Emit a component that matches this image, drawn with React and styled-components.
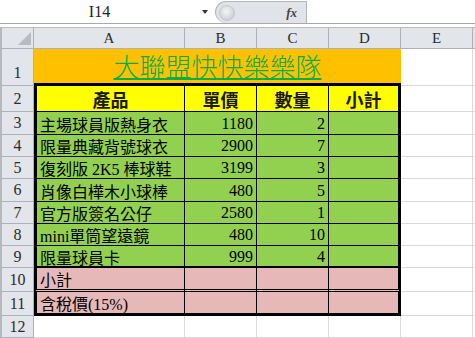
import React from "react";
import styled, { createGlobalStyle } from "styled-components";

const GlobalStyle = createGlobalStyle`
  html, body {
    margin: 0;
    padding: 0;
    background: #ffffff;
    overflow: hidden;
  }
`;

const gridLine = "1px solid #d9d9d9";
const thin = "1px solid #000";
const thick = "3px solid #000";
const headBorder = "#aeb2b8";

const Window = styled.div`
  width: 475px;
  height: 338px;
  display: flex;
  flex-direction: column;
  background: #fff;
`;

const FormulaBar = styled.div`
  display: flex;
  height: 24px;
  box-sizing: border-box;
  border-bottom: 1px solid #a7abb0;
`;

const NameBox = styled.div`
  width: 215px;
  position: relative;
  display: flex;
  align-items: center;
  justify-content: center;
  font: 16px "Liberation Serif", serif;
  color: #222;
  padding-right: 16px;
  box-sizing: border-box;
`;

const DropArrow = styled.span`
  position: absolute;
  right: 7px;
  top: 10px;
  width: 0;
  height: 0;
  border-left: 3px solid transparent;
  border-right: 3px solid transparent;
  border-top: 4px solid #333;
`;

const Pill = styled.div`
  width: 92px;
  box-sizing: border-box;
  display: flex;
  align-items: center;
  justify-content: space-between;
  padding: 0 9px 0 3px;
  background: #e0e3e7;
  border: 1px solid #b3b7bd;
  border-bottom: none;
  border-radius: 12px 0 0 12px;
  margin-top: 1px;
`;

const Knob = styled.span`
  width: 14px;
  height: 14px;
  border-radius: 50%;
  background: radial-gradient(circle at 45% 40%, #f4f5f7 0%, #d4d7db 60%, #b9bdc2 100%);
  border: 1px solid #c4c8cd;
`;

const Fx = styled.span`
  font: italic bold 13px "Liberation Serif", serif;
  color: #444;
`;

const FormulaInput = styled.div`
  flex: 1;
  background: #fff;
`;

const Gap = styled.div`
  height: 3px;
  border-bottom: 1px solid #b9bdc2;
`;

const Sheet = styled.div`
  flex: 1;
  display: grid;
  grid-template-columns: 34px 151px 72px 72px 72px 72px 1fr;
  grid-template-rows: 21px 37px 26px 23px 22px 22px 23px 22px 22px 22px 24px 24px 1fr;
`;

const Head = styled.div`
  box-sizing: border-box;
  display: flex;
  justify-content: center;
  align-items: ${(p) => (p.$bottom ? "flex-end" : "center")};
  padding-bottom: ${(p) => (p.$bottom ? "3px" : "0")};
  background: #e2e5e9;
  border-right: 1px solid ${headBorder};
  border-bottom: 1px solid ${headBorder};
  border-left: ${(p) => (p.$edge ? "2px solid #b5b9be" : "none")};
  font: ${(p) => (p.$row ? "16px" : "15px")} "Liberation Serif", serif;
  color: #2b2b2b;
`;

const Corner = styled(Head)`
  position: relative;
  &::after {
    content: "";
    position: absolute;
    right: 2px;
    bottom: 3px;
    width: 0;
    height: 0;
    border-left: 13px solid transparent;
    border-bottom: 13px solid #b8bcc2;
  }
`;

const justify = { left: "flex-start", right: "flex-end", center: "center" };

const Cell = styled.div`
  box-sizing: border-box;
  display: flex;
  align-items: center;
  justify-content: ${(p) => justify[p.$align || "left"]};
  padding: 1px 3px 0 3px;
  grid-column: ${(p) => p.$span || "auto"};
  background: ${(p) => p.$bg || "#fff"};
  border-right: ${(p) => p.$br || gridLine};
  border-bottom: ${(p) => p.$bb || gridLine};
  border-left: ${(p) => p.$bl || "none"};
  font: 16px "Liberation Serif", "Noto Sans CJK TC", serif;
  color: #000;
  white-space: nowrap;
  overflow: hidden;
`;

const TitleCell = styled(Cell)`
  align-items: flex-end;
  padding-bottom: 3px;
  overflow: visible;
`;

const Title = styled.span`
  font: 300 26px "Noto Sans CJK TC", sans-serif;
  line-height: 28px;
  color: #00b050;
  text-decoration: underline;
  text-decoration-thickness: 2px;
  text-underline-offset: 1px;
`;

const HeaderLabel = styled.span`
  font: bold 18px "Noto Sans CJK TC", sans-serif;
  color: #1a1a00;
`;

const products = [
  ["主場球員版熱身衣", 1180, 2],
  ["限量典藏背號球衣", 2900, 7],
  ["復刻版 2K5 棒球鞋", 3199, 3],
  ["肖像白樺木小球棒", 480, 5],
  ["官方版簽名公仔", 2580, 1],
  ["mini單筒望遠鏡", 480, 10],
  ["限量球員卡", 999, 4],
];

const GREEN = "#92d050";
const PINK = "#e6b8b7";
const YELLOW = "#ffff00";
const ORANGE = "#ffc000";

const Blank = ({ n }) => (
  <>
    {Array.from({ length: n }).map((_, i) => (
      <Cell key={i} />
    ))}
  </>
);

const TableRow = ({ num, cells, bg, bottom }) => (
  <>
    <Head $row $edge>{num}</Head>
    <Cell $bg={bg} $bl={thick} $br={thin} $bb={bottom}>
      {cells[0]}
    </Cell>
    <Cell $bg={bg} $br={thin} $bb={bottom} $align="right">
      {cells[1]}
    </Cell>
    <Cell $bg={bg} $br={thin} $bb={bottom} $align="right">
      {cells[2]}
    </Cell>
    <Cell $bg={bg} $br={thick} $bb={bottom} $align="right">
      {cells[3]}
    </Cell>
    <Blank n={2} />
  </>
);

export default function App() {
  return (
    <Window>
      <GlobalStyle />
      <FormulaBar>
        <NameBox>
          I14
          <DropArrow />
        </NameBox>
        <Pill>
          <Knob />
          <Fx>fx</Fx>
        </Pill>
        <FormulaInput />
      </FormulaBar>
      <Gap />
      <Sheet>
        <Corner $edge />
        {["A", "B", "C", "D", "E", ""].map((c, i) => (
          <Head key={i}>{c}</Head>
        ))}

        <Head $row $edge $bottom>
          1
        </Head>
        <TitleCell $span="span 4" $bg={ORANGE} $br="none" $bb={thick} $align="center">
          <Title>大聯盟快快樂樂隊</Title>
        </TitleCell>
        <Blank n={2} />

        <Head $row $edge>2</Head>
        {["產品", "單價", "數量", "小計"].map((h, i) => (
          <Cell
            key={h}
            $bg={YELLOW}
            $bl={i === 0 ? thick : "none"}
            $br={i === 3 ? thick : thin}
            $bb={thin}
            $align="center"
          >
            <HeaderLabel>{h}</HeaderLabel>
          </Cell>
        ))}
        <Blank n={2} />

        {products.map((p, i) => (
          <TableRow
            key={p[0]}
            num={i + 3}
            bg={GREEN}
            cells={[p[0], p[1], p[2], ""]}
            bottom={i === products.length - 1 ? "2px solid #000" : thin}
          />
        ))}
        <TableRow num={10} bg={PINK} cells={["小計", "", "", ""]} bottom="3px double #000" />
        <TableRow num={11} bg={PINK} cells={["含稅價(15%)", "", "", ""]} bottom={thick} />

        <Head $row $edge>12</Head>
        <Blank n={6} />
      </Sheet>
    </Window>
  );
}
